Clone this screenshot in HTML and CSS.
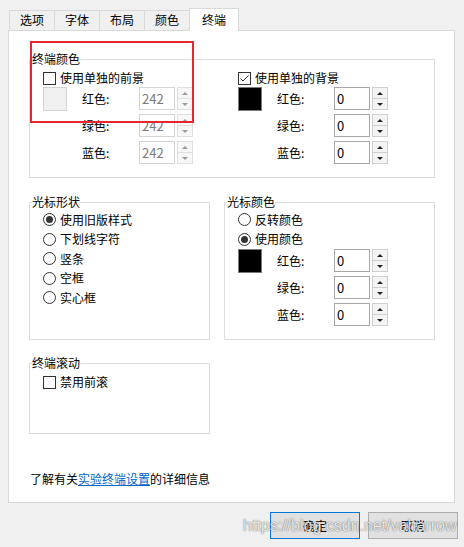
FILE: index.html
```html
<!DOCTYPE html>
<html lang="zh-CN">
<head>
<meta charset="utf-8">
<title>终端</title>
<link rel="stylesheet" href="styles.css">
</head>
<body>
<div class="window">
  <div class="tabs">
    <div class="tab">选项</div>
    <div class="tab">字体</div>
    <div class="tab">布局</div>
    <div class="tab">颜色</div>
    <div class="tab active">终端</div>
  </div>
  <div class="panel">
    <fieldset class="group g-term">
      <legend>终端颜色</legend>
      <div class="gbody twocol">
        <div class="colorcol">
          <div class="check"><span class="cb"></span><span>使用单独的前景</span></div>
          <div class="colorblock">
            <div class="swatch light"></div>
            <div class="rows">
              <span class="lbl">红色:</span><div class="input disabled">242</div><div class="btns disabled"><span class="up"></span><span class="dn"></span></div>
              <span class="lbl">绿色:</span><div class="input disabled">242</div><div class="btns disabled"><span class="up"></span><span class="dn"></span></div>
              <span class="lbl">蓝色:</span><div class="input disabled">242</div><div class="btns disabled"><span class="up"></span><span class="dn"></span></div>
            </div>
          </div>
        </div>
        <div class="colorcol">
          <div class="check"><span class="cb"><svg width="11" height="11" viewBox="0 0 11 11"><path d="M1.5 5.5 L4 8 L9.5 2.5" fill="none" stroke="#333" stroke-width="1"/></svg></span><span>使用单独的背景</span></div>
          <div class="colorblock">
            <div class="swatch dark"></div>
            <div class="rows">
              <span class="lbl">红色:</span><div class="input">0</div><div class="btns"><span class="up"></span><span class="dn"></span></div>
              <span class="lbl">绿色:</span><div class="input">0</div><div class="btns"><span class="up"></span><span class="dn"></span></div>
              <span class="lbl">蓝色:</span><div class="input">0</div><div class="btns"><span class="up"></span><span class="dn"></span></div>
            </div>
          </div>
        </div>
      </div>
    </fieldset>

    <div class="pair">
      <fieldset class="group g-shape">
        <legend>光标形状</legend>
        <div class="gbody">
          <div class="radio"><span class="rb on"></span><span>使用旧版样式</span></div>
          <div class="radio"><span class="rb"></span><span>下划线字符</span></div>
          <div class="radio"><span class="rb"></span><span>竖条</span></div>
          <div class="radio"><span class="rb"></span><span>空框</span></div>
          <div class="radio"><span class="rb"></span><span>实心框</span></div>
        </div>
      </fieldset>
      <fieldset class="group g-cursor">
        <legend>光标颜色</legend>
        <div class="gbody">
          <div class="radio"><span class="rb"></span><span>反转颜色</span></div>
          <div class="radio"><span class="rb on"></span><span>使用颜色</span></div>
          <div class="colorblock">
            <div class="swatch dark"></div>
            <div class="rows">
              <span class="lbl">红色:</span><div class="input">0</div><div class="btns"><span class="up"></span><span class="dn"></span></div>
              <span class="lbl">绿色:</span><div class="input">0</div><div class="btns"><span class="up"></span><span class="dn"></span></div>
              <span class="lbl">蓝色:</span><div class="input">0</div><div class="btns"><span class="up"></span><span class="dn"></span></div>
            </div>
          </div>
        </div>
      </fieldset>
    </div>

    <fieldset class="group g-scroll">
      <legend>终端滚动</legend>
      <div class="gbody scrollbody">
        <div class="check"><span class="cb"></span><span>禁用前滚</span></div>
      </div>
    </fieldset>

    <p class="info">了解有关<a class="link" href="#">实验终端设置</a>的详细信息</p>
  </div>

  <div class="buttons">
    <button class="btn default">确定</button>
    <button class="btn">取消</button>
  </div>

  <div class="annotation"></div>
  <div class="watermark">https://blog.csdn.net/vaharrow</div>
</div>
</body>
</html>
```

FILE: styles.css
```css
body {
  margin: 0;
  background: #f0f0f0;
  font-family: "Noto Sans CJK SC", "Noto Sans", sans-serif;
  font-size: 12px;
  color: #000;
}

.window {
  position: relative;
  width: 464px;
  height: 547px;
  overflow: hidden;
}

/* tabs */
.tabs {
  display: flex;
  align-items: flex-end;
  height: 22px;
  margin-top: 8px;
  padding-left: 9px;
}
.tab {
  box-sizing: border-box;
  height: 20px;
  line-height: 18px;
  padding: 0 10px;
  border: 1px solid #d9d9d9;
  border-bottom: none;
  margin-left: -1px;
  background: #f0f0f0;
}
.tab:first-child { margin-left: 0; }
.tab.active {
  height: 23px;
  line-height: 21px;
  padding: 0 12px;
  background: #fff;
  margin-bottom: -1px;
  position: relative;
  z-index: 1;
}

/* panel */
.panel {
  box-sizing: border-box;
  margin-left: 8px;
  width: 447px;
  height: 473px;
  background: #fff;
  border: 1px solid #d9d9d9;
  padding: 20px 0 0 20px;
}

.group {
  margin: 0;
  padding: 0;
  min-width: 0;
  box-sizing: border-box;
  border: 1px solid #dcdcdc;
}
.group legend {
  padding: 0;
  margin-left: 2px;
  line-height: 16px;
}
.gbody {
  padding: 3px 0 13px 13px;
}
.g-term { width: 406px; }
.twocol {
  display: grid;
  grid-template-columns: 195px 150px;
}

.pair {
  display: flex;
  gap: 14px;
  margin-top: 16px;
}
.g-shape { width: 181px; }
.g-cursor { width: 211px; }
.g-cursor .gbody { padding-top: 0; }
.g-shape .gbody { padding-top: 0; padding-bottom: 0; }

.g-scroll { width: 181px; margin-top: 15px; }
.scrollbody { box-sizing: border-box; height: 62px; padding-bottom: 0; }

/* checkbox */
.check {
  display: flex;
  align-items: center;
  gap: 4px;
  height: 16px;
  line-height: 16px;
}
.cb {
  box-sizing: border-box;
  width: 13px;
  height: 13px;
  border: 1px solid #333;
  background: #fff;
  display: flex;
  align-items: center;
  justify-content: center;
}
.cb svg { display: block; }

/* radio */
.radio {
  display: flex;
  align-items: center;
  gap: 4px;
  height: 19.5px;
  line-height: 16px;
}
.rb {
  box-sizing: border-box;
  width: 13px;
  height: 13px;
  border: 1px solid #333;
  border-radius: 50%;
  background: #fff;
  display: flex;
  align-items: center;
  justify-content: center;
}
.rb.on::after {
  content: "";
  width: 7px;
  height: 7px;
  border-radius: 50%;
  background: #333;
}

/* color block */
.colorblock {
  display: flex;
  align-items: flex-start;
  margin-top: 1px;
}
.g-cursor .colorblock { margin-top: 0; }
.swatch {
  box-sizing: border-box;
  width: 24px;
  height: 24px;
  margin-right: 15px;
}
.swatch.light { background: #f0f0f0; border: 1px solid #d2d2d2; }
.swatch.dark { background: #000; border: 1px solid #7a7a7a; }

.rows {
  display: grid;
  grid-template-columns: 55px 36px 16px;
  column-gap: 2px;
  row-gap: 4px;
  align-items: center;
}
.lbl { line-height: 16px; }

.input {
  box-sizing: border-box;
  height: 23px;
  border: 1px solid #a8a8a8;
  padding-left: 2px;
  font-size: 13px;
  line-height: 21px;
  background: #fff;
}
.input.disabled {
  border-color: #d4d4d4;
  color: #7a7a7a;
}

.btns {
  box-sizing: border-box;
  height: 23px;
  display: flex;
  flex-direction: column;
}
.btns span {
  flex: 1;
  display: flex;
  align-items: center;
  justify-content: center;
  border: 1px solid #d0d0d0;
  background: #f4f4f4;
}
.btns .dn { border-top: none; }
.btns .up::before {
  content: "";
  width: 0;
  height: 0;
  border-left: 3px solid transparent;
  border-right: 3px solid transparent;
  border-bottom: 3px solid #222;
}
.btns .dn::before {
  content: "";
  width: 0;
  height: 0;
  border-left: 3px solid transparent;
  border-right: 3px solid transparent;
  border-top: 3px solid #222;
}
.btns.disabled span { border-color: #e0e0e0; background: #f7f7f7; }
.btns.disabled .up::before { border-bottom-color: #9a9a9a; }
.btns.disabled .dn::before { border-top-color: #9a9a9a; }

/* info */
.info {
  margin: 37px 0 0 1px;
  line-height: 16px;
}
.link {
  color: #0066cc;
  text-decoration: underline;
}

/* buttons */
.buttons {
  display: flex;
  justify-content: flex-end;
  gap: 8px;
  margin-top: 9px;
  padding-right: 6px;
}
.btn {
  box-sizing: border-box;
  width: 90px;
  height: 27px;
  background: #e1e1e1;
  border: 1px solid #adadad;
  font-family: inherit;
  font-size: 12px;
  color: #000;
  padding: 0;
}
.btn.default { border-color: #0078d7; }

/* overlays */
.annotation {
  position: absolute;
  left: 30px;
  top: 41px;
  width: 164px;
  height: 82px;
  box-sizing: border-box;
  border: 2px solid #e8262d;
  pointer-events: none;
}
.watermark {
  position: absolute;
  left: 243px;
  top: 517px;
  font-family: "Liberation Sans", Arial, sans-serif;
  font-size: 16px;
  line-height: 18px;
  color: rgba(255, 255, 255, 0.85);
  text-shadow: 0 0 1px rgba(0, 0, 0, 0.55), 0 0 2px rgba(0, 0, 0, 0.25);
  pointer-events: none;
  white-space: nowrap;
}
```
